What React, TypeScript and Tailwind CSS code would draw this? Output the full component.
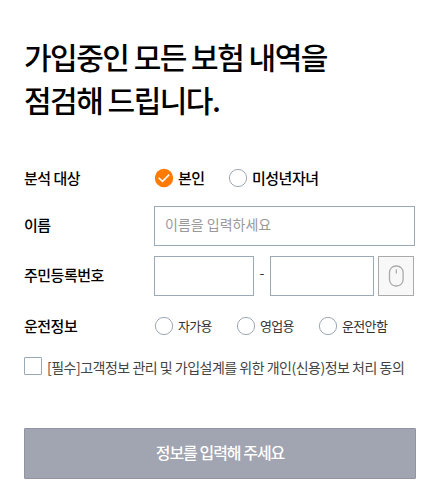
import type { ReactNode } from 'react';

function Row({ label, raised = false, children }: { label: string; raised?: boolean; children: ReactNode }) {
  return (
    <div className="flex h-10 items-center">
      <div
        className={`w-[130px] shrink-0 whitespace-nowrap text-[15px] font-medium tracking-[-0.5px] text-black ${
          raised ? 'pb-0.5' : ''
        }`}
      >
        {label}
      </div>
      {children}
    </div>
  );
}

function Radio({ checked = false }: { checked?: boolean }) {
  return (
    <svg width="20" height="20" viewBox="0 0 20 20" className="shrink-0" fill="none">
      {checked ? (
        <>
          <circle cx="10" cy="10" r="9.2" fill="#ff7a00" />
          <path d="M4.6 9.8 8.5 13.4 15.2 6.6" stroke="#fff" strokeWidth="1.5" />
        </>
      ) : (
        <circle cx="10" cy="10" r="8.6" stroke="#9ba7b2" strokeWidth="1" fill="#fff" />
      )}
    </svg>
  );
}

export default function App() {
  return (
    <div className="h-[486px] w-[438px] overflow-hidden bg-white pl-6 pt-[35px] font-['Noto_Sans_CJK_KR',sans-serif] text-[#333]">
      <h1 className="whitespace-nowrap text-[30px] font-medium leading-[43px] tracking-[-1.5px] text-black">
        가입중인 모든 보험 내역을
        <br />
        점검해 드립니다.
      </h1>

      <div className="mt-[37px] flex w-[392px] flex-col">
        <Row label="분석 대상">
          <label className="flex w-[74px] items-center gap-1 whitespace-nowrap text-[15px] font-medium tracking-[-0.5px] text-black">
            <Radio checked />
            본인
          </label>
          <label className="flex items-center gap-1 whitespace-nowrap text-[15px] font-medium tracking-[-0.5px] text-black">
            <Radio />
            미성년자녀
          </label>
        </Row>

        <div className="mt-2">
          <Row label="이름" raised>
            <input
              className="h-10 w-[261px] border border-[#9ba9b4] px-[10px] pb-1 text-[14px] outline-none placeholder:text-[#999]"
              placeholder="이름을 입력하세요"
            />
          </Row>
        </div>

        <div className="mt-[10px]">
          <Row label="주민등록번호" raised>
            <input className="h-10 w-[100px] border border-[#9ba9b4] outline-none" />
            <span className="w-4 pb-2 text-center text-[14px]">-</span>
            <input className="h-10 w-[104px] border border-[#9ba9b4] outline-none" />
            <button className="ml-1 flex h-10 w-9 items-center justify-center border border-[#aaa] bg-[#f8f8f8]">
              <svg width="16" height="22" viewBox="0 0 16 22" fill="none" stroke="#aaa">
                <rect x="1.5" y="1" width="13.6" height="20" rx="6.4" strokeWidth="1.3" />
                <path d="M8.3 4.2v4.3" strokeWidth="1.2" />
              </svg>
            </button>
          </Row>
        </div>

        <div className="mt-[10px]">
          <Row label="운전정보">
            {['자가용', '영업용', '운전안함'].map((name) => (
              <label
                key={name}
                className="flex w-[82px] items-center gap-1 whitespace-nowrap text-[13px] tracking-[-0.65px] text-[#333]"
              >
                <Radio />
                {name}
              </label>
            ))}
          </Row>
        </div>

        <label className="mt-[10px] flex h-5 items-center whitespace-nowrap text-[14px] tracking-[-0.5px] text-[#444]">
          <span className="mr-[5px] h-[18px] w-[18px] shrink-0 rounded-[1px] border border-[#9ba9b4] bg-white" />
          <span className="pt-0.5">[필수]고객정보 관리 및 가입설계를 위한 개인(신용)정보 처리 동의</span>
        </label>

        <button className="mt-[52px] h-[51px] w-[392px] rounded-[1px] border border-[#9194a1] bg-[#a1a4b1] pb-[3px] text-[16px] font-medium tracking-[-1px] text-white">
          정보를 입력해 주세요
        </button>
      </div>
    </div>
  );
}
